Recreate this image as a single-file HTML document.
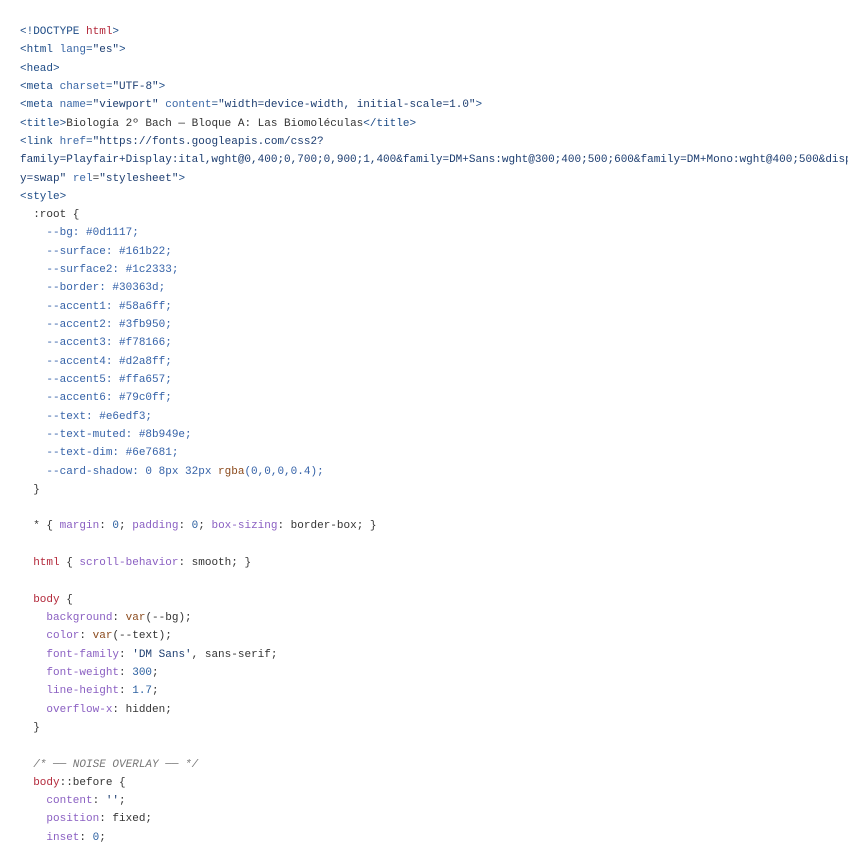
<!DOCTYPE html>
<html><head><meta charset="UTF-8"><style>
html,body{margin:0;padding:0;background:#fff;width:848px;height:848px;overflow:hidden}
pre{margin:0;position:absolute;left:20px;top:23px;font-family:"Liberation Mono",monospace;font-size:11px;line-height:18.31px;color:#333;white-space:pre}
.t{color:#1d4b86}.h{color:#b3283a}.a{color:#3a67a6}.s{color:#1c3d70}.p{color:#8a5fc2}.v{color:#8b4a1c}.n{color:#2a5fa0}.c{color:#777;font-style:italic}.k{color:#3562a8}
</style></head><body><pre><span class="t">&lt;!DOCTYPE <span class="h">html</span>&gt;</span>
<span class="t">&lt;html <span class="a">lang</span>=<span class="s">"es"</span>&gt;</span>
<span class="t">&lt;head&gt;</span>
<span class="t">&lt;meta <span class="a">charset</span>=<span class="s">"UTF-8"</span>&gt;</span>
<span class="t">&lt;meta <span class="a">name</span>=<span class="s">"viewport"</span> <span class="a">content</span>=<span class="s">"width=device-width, initial-scale=1.0"</span>&gt;</span>
<span class="t">&lt;title&gt;</span>Biología 2º Bach — Bloque A: Las Biomoléculas<span class="t">&lt;/title&gt;</span>
<span class="t">&lt;link <span class="a">href</span>=<span class="s">"https://fonts.googleapis.com/css2?</span></span>
<span class="s">family=Playfair+Display:ital,wght@0,400;0,700;0,900;1,400&amp;family=DM+Sans:wght@300;400;500;600&amp;family=DM+Mono:wght@400;500&amp;display</span>
<span class="s">y=swap"</span> <span class="a">rel</span>=<span class="s">"stylesheet"</span><span class="t">&gt;</span>
<span class="t">&lt;style&gt;</span>
  :root {
    <span class="k">--bg: #0d1117;</span>
    <span class="k">--surface: #161b22;</span>
    <span class="k">--surface2: #1c2333;</span>
    <span class="k">--border: #30363d;</span>
    <span class="k">--accent1: #58a6ff;</span>
    <span class="k">--accent2: #3fb950;</span>
    <span class="k">--accent3: #f78166;</span>
    <span class="k">--accent4: #d2a8ff;</span>
    <span class="k">--accent5: #ffa657;</span>
    <span class="k">--accent6: #79c0ff;</span>
    <span class="k">--text: #e6edf3;</span>
    <span class="k">--text-muted: #8b949e;</span>
    <span class="k">--text-dim: #6e7681;</span>
    <span class="k">--card-shadow: 0 8px 32px <span class="v">rgba</span>(0,0,0,0.4);</span>
  }

  * { <span class="p">margin</span>: <span class="n">0</span>; <span class="p">padding</span>: <span class="n">0</span>; <span class="p">box-sizing</span>: border-box; }

  <span class="h">html</span> { <span class="p">scroll-behavior</span>: smooth; }

  <span class="h">body</span> {
    <span class="p">background</span>: <span class="v">var</span>(--bg);
    <span class="p">color</span>: <span class="v">var</span>(--text);
    <span class="p">font-family</span>: <span class="s">'DM Sans'</span>, sans-serif;
    <span class="p">font-weight</span>: <span class="n">300</span>;
    <span class="p">line-height</span>: <span class="n">1.7</span>;
    <span class="p">overflow-x</span>: hidden;
  }

  <span class="c">/* ── NOISE OVERLAY ── */</span>
  <span class="h">body</span>::before {
    <span class="p">content</span>: <span class="s">''</span>;
    <span class="p">position</span>: fixed;
    <span class="p">inset</span>: <span class="n">0</span>;
</pre></body></html>
